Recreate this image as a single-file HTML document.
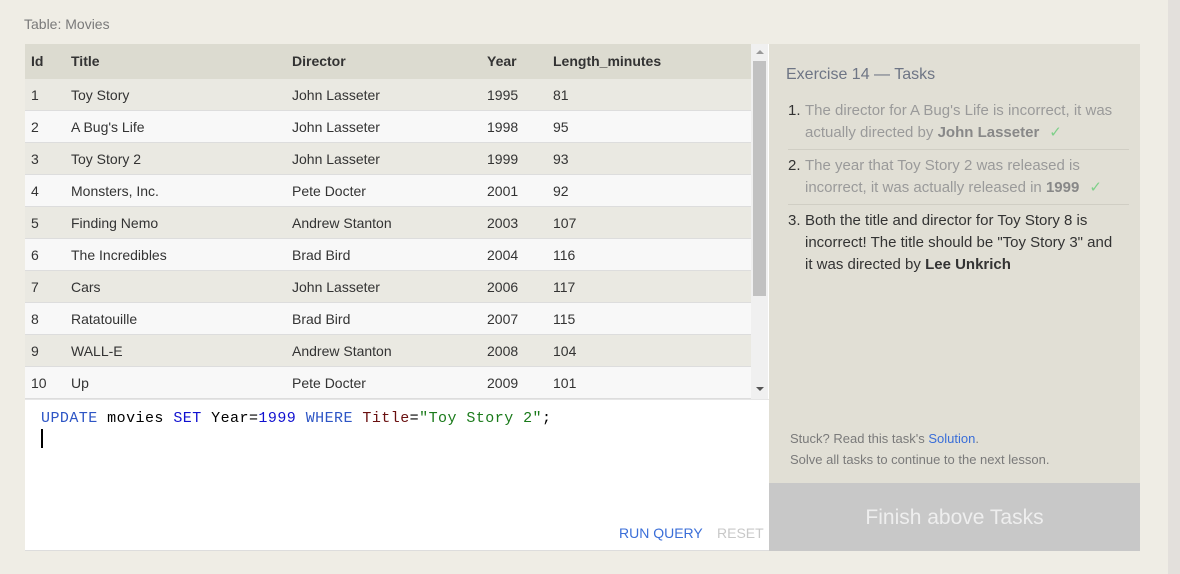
<!DOCTYPE html>
<html><head><meta charset="utf-8"><style>
*{margin:0;padding:0;box-sizing:border-box}
body{width:1180px;height:574px;background:#efede5;font-family:"Liberation Sans",sans-serif;position:relative;overflow:hidden}
.strip{position:absolute;left:1168px;top:0;width:12px;height:574px;background:#e3e0dc}
.cap{position:absolute;left:24px;top:16px;font-size:14px;color:#7a7a7a}
.panel{position:absolute;left:25px;top:44px;width:744px;height:507px;background:#fff;border-bottom:1px solid #ddd}
.row{position:absolute;left:0;width:726px;height:32px;font-size:14px;color:#333;border-bottom:1px solid #ddd}
.row span{position:absolute;top:8px}
.hd{background:#dcdbd0;height:35px;font-weight:bold;border:none}
.hd span{top:9px}
.a{background:#eae9e2}.b{background:#f8f8f8}
.c1{left:6px}.c2{left:46px}.c3{left:267px}.c4{left:462px}.c5{left:528px}
.sb{position:absolute;left:726px;top:0;width:17px;height:355px;background:#f0f0f0}
.thumb{position:absolute;left:2px;top:17px;width:13px;height:235px;background:#c1c1c1}
.code{position:absolute;left:16px;top:366px;font-family:"Liberation Mono",monospace;font-size:15px;letter-spacing:0.45px;color:#000}
.kw{color:#2d55c5}.bl{color:#1010d0}.st{color:#1a7a1a}.nm{color:#1010d0}
.cur{position:absolute;left:16px;top:385px;width:2px;height:19px;background:#000}
.btns{position:absolute;top:481px;font-size:14px}
.rp{position:absolute;left:769px;top:44px;width:371px;height:507px;background:#e1dfd5}
.rp h3{position:absolute;left:17px;top:22px;font-weight:normal;font-size:16px;color:#6e7585}
ol{position:absolute;left:19px;top:56px;width:341px;font-size:15px;line-height:22px;list-style:none}
li{position:relative;padding-left:17px;padding-bottom:5px;margin-bottom:5px}
li .n{position:absolute;left:0;color:#333}
li.d{color:#9a9a9a;border-bottom:1px solid #d0cec4}
li.d b{color:#888}
.ck{color:#7fd08a;margin-left:10px}
li.t{color:#333;border:none;padding-right:12px}
.stuck{position:absolute;left:21px;top:384px;font-size:13px;color:#7a7a7a;line-height:21px}
.stuck a{color:#3a6ed8;text-decoration:none}
.fin{position:absolute;left:0;top:439px;width:371px;height:68px;background:#c8c8c8;color:#eeeeee;font-size:21px;text-align:center;line-height:70px}
</style></head><body>
<div class="strip"></div>
<div class="cap">Table: Movies</div>
<div class="panel">
<div class="row hd" style="top:0"><span class="c1">Id</span><span class="c2">Title</span><span class="c3">Director</span><span class="c4">Year</span><span class="c5">Length_minutes</span></div>
<div class="row a" style="top:35px"><span class="c1">1</span><span class="c2">Toy Story</span><span class="c3">John Lasseter</span><span class="c4">1995</span><span class="c5">81</span></div>
<div class="row b" style="top:67px"><span class="c1">2</span><span class="c2">A Bug's Life</span><span class="c3">John Lasseter</span><span class="c4">1998</span><span class="c5">95</span></div>
<div class="row a" style="top:99px"><span class="c1">3</span><span class="c2">Toy Story 2</span><span class="c3">John Lasseter</span><span class="c4">1999</span><span class="c5">93</span></div>
<div class="row b" style="top:131px"><span class="c1">4</span><span class="c2">Monsters, Inc.</span><span class="c3">Pete Docter</span><span class="c4">2001</span><span class="c5">92</span></div>
<div class="row a" style="top:163px"><span class="c1">5</span><span class="c2">Finding Nemo</span><span class="c3">Andrew Stanton</span><span class="c4">2003</span><span class="c5">107</span></div>
<div class="row b" style="top:195px"><span class="c1">6</span><span class="c2">The Incredibles</span><span class="c3">Brad Bird</span><span class="c4">2004</span><span class="c5">116</span></div>
<div class="row a" style="top:227px"><span class="c1">7</span><span class="c2">Cars</span><span class="c3">John Lasseter</span><span class="c4">2006</span><span class="c5">117</span></div>
<div class="row b" style="top:259px"><span class="c1">8</span><span class="c2">Ratatouille</span><span class="c3">Brad Bird</span><span class="c4">2007</span><span class="c5">115</span></div>
<div class="row a" style="top:291px"><span class="c1">9</span><span class="c2">WALL-E</span><span class="c3">Andrew Stanton</span><span class="c4">2008</span><span class="c5">104</span></div>
<div class="row b" style="top:323px"><span class="c1">10</span><span class="c2">Up</span><span class="c3">Pete Docter</span><span class="c4">2009</span><span class="c5">101</span></div>
<div class="sb"><div class="thumb"></div>
<div style="position:absolute;left:5px;top:6px;border:4px solid transparent;border-top:none;border-bottom:4px solid #999"></div>
<div style="position:absolute;left:5px;top:343px;border:4px solid transparent;border-bottom:none;border-top:4px solid #555"></div></div>
<div style="position:absolute;left:0;top:355px;width:744px;height:1px;background:#e6e6e6"></div>
<div class="code"><span class="kw">UPDATE</span> movies <span class="bl">SET</span> Year=<span class="nm">1999</span> <span class="kw">WHERE</span> <span style="color:#6a1010">Title</span>=<span class="st">"Toy Story 2"</span>;</div>
<div class="cur"></div>
<div class="btns" style="left:594px;color:#3a6ed8">RUN QUERY</div>
<div class="btns" style="left:692px;color:#c8c8c8">RESET</div>
</div>
<div class="rp">
<h3>Exercise 14 — Tasks</h3>
<ol>
<li class="d"><span class="n">1.</span>The director for A Bug's Life is incorrect, it was actually directed by <b>John Lasseter</b><span class="ck">✓</span></li>
<li class="d"><span class="n">2.</span>The year that Toy Story 2 was released is incorrect, it was actually released in <b>1999</b><span class="ck">✓</span></li>
<li class="t"><span class="n">3.</span>Both the title and director for Toy Story 8 is incorrect! The title should be "Toy Story 3" and<br>it was directed by <b>Lee Unkrich</b></li>
</ol>
<div class="stuck">Stuck? Read this task's <a>Solution</a>.<br>Solve all tasks to continue to the next lesson.</div>
<div class="fin">Finish above Tasks</div>
</div>
</body></html>
